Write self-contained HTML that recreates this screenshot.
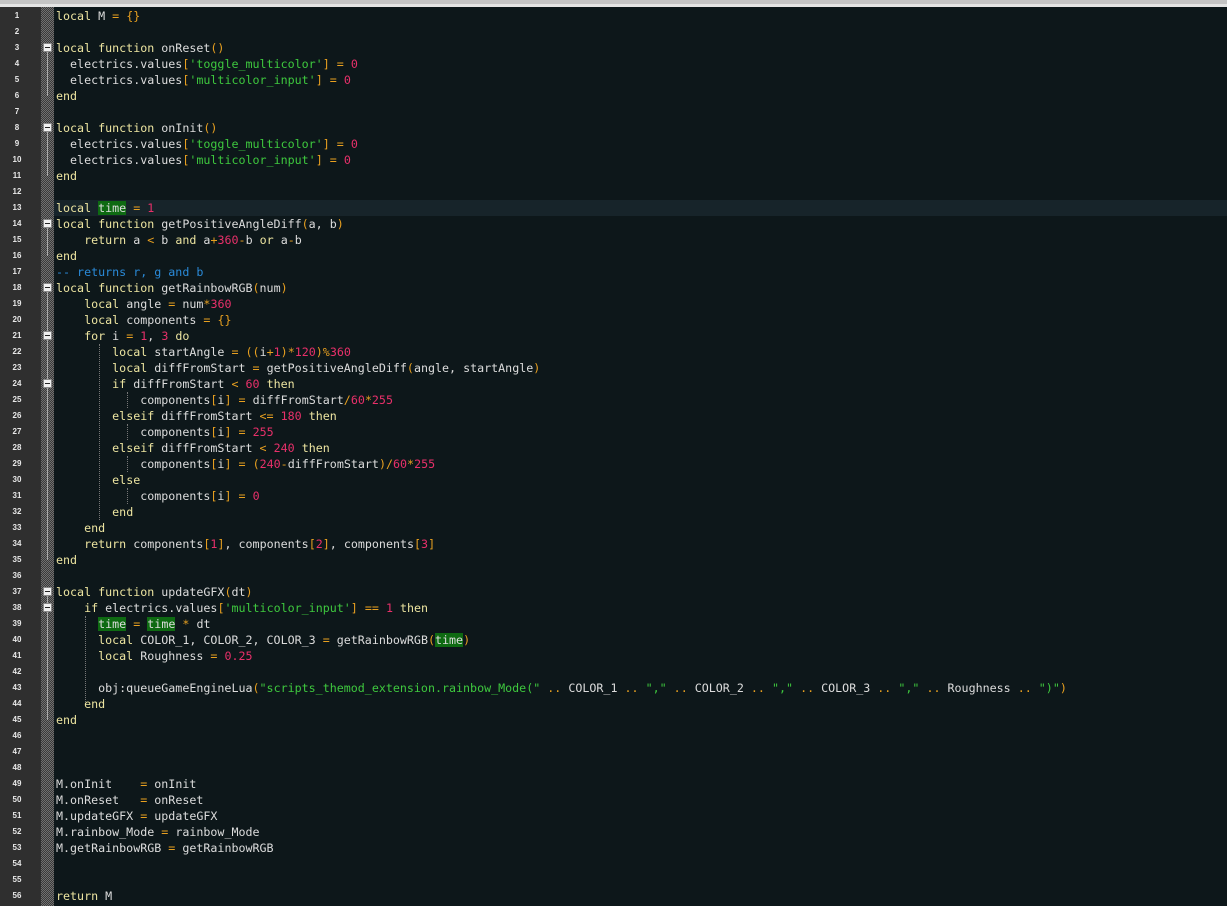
<!DOCTYPE html>
<html><head><meta charset="utf-8"><style>
body{margin:0;width:1227px;height:906px;background:#0d171a;overflow:hidden;position:relative;font-family:"Liberation Mono",monospace}
#tabs{position:absolute;left:0;top:0;width:1227px;height:4px;background:#c4c4c4}
#tabs2{position:absolute;left:0;top:4px;width:1227px;height:3px;background:#e4e4e4}
#gut{position:absolute;left:0;top:7px;width:41px;height:899px;background:#2f2f2f}
#fold{position:absolute;left:41px;top:7px;width:13px;height:899px;background-color:#5a5a5a;background-image:repeating-conic-gradient(#3a3a3a 0 25%,#707070 0 50%);background-size:2px 2px}
#cur{position:absolute;left:54px;top:200px;width:1173px;height:16px;background:#17242a}
.ln{position:absolute;left:0;width:34px;text-align:center;font-size:8px;line-height:16px;color:#e8e8e8;font-family:"Liberation Sans",sans-serif;font-weight:bold}
pre{position:absolute;left:56px;top:8px;margin:0;font-size:11.67px;line-height:16px;color:#dcdcdc}
.k{color:#ece4a0}.o{color:#e8a020}.n{color:#e8306a}.s{color:#3ec83e}.c{color:#2a8ad8}
.h{background:#0e6a12}
.fb{position:absolute;left:43px;width:9px;height:9px;background:#f0f0f0;box-sizing:border-box;border:1px solid #888}
.fb:after{content:"";position:absolute;left:1px;top:3px;width:5px;height:1px;background:#222}
.fl{position:absolute;left:47px;width:1px;background:#aaa}
.g{position:absolute;width:1px;border-left:1px dotted #777}
</style></head><body>
<div id="tabs"></div><div id="tabs2"></div>
<div id="gut"></div><div id="fold"></div><div id="cur"></div>
<div id="lns"></div>
<div class="fb" style="top:43px"></div><div class="fl" style="top:52px;height:44px"></div>
<div class="fb" style="top:123px"></div><div class="fl" style="top:132px;height:44px"></div>
<div class="fb" style="top:219px"></div><div class="fl" style="top:228px;height:28px"></div>
<div class="fb" style="top:283px"></div><div class="fl" style="top:292px;height:268px"></div>
<div class="fb" style="top:331px"></div>
<div class="fb" style="top:379px"></div>
<div class="fb" style="top:587px"></div><div class="fl" style="top:596px;height:124px"></div>
<div class="fb" style="top:603px"></div>
<div class="g" style="left:99px;top:344px;height:176px"></div>
<div class="g" style="left:127px;top:392px;height:16px"></div>
<div class="g" style="left:127px;top:424px;height:16px"></div>
<div class="g" style="left:127px;top:456px;height:16px"></div>
<div class="g" style="left:127px;top:488px;height:16px"></div>
<div class="g" style="left:85px;top:616px;height:88px"></div>
<pre><span class="k">local</span> M <span class="o">=</span> <span class="o">{}</span>

<span class="k">local function</span> onReset<span class="o">()</span>
  electrics.values<span class="o">[</span><span class="s">'toggle_multicolor'</span><span class="o">]</span> <span class="o">=</span> <span class="n">0</span>
  electrics.values<span class="o">[</span><span class="s">'multicolor_input'</span><span class="o">]</span> <span class="o">=</span> <span class="n">0</span>
<span class="k">end</span>

<span class="k">local function</span> onInit<span class="o">()</span>
  electrics.values<span class="o">[</span><span class="s">'toggle_multicolor'</span><span class="o">]</span> <span class="o">=</span> <span class="n">0</span>
  electrics.values<span class="o">[</span><span class="s">'multicolor_input'</span><span class="o">]</span> <span class="o">=</span> <span class="n">0</span>
<span class="k">end</span>

<span class="k">local</span> <span class="h">time</span> <span class="o">=</span> <span class="n">1</span>
<span class="k">local function</span> getPositiveAngleDiff<span class="o">(</span>a, b<span class="o">)</span>
    <span class="k">return</span> a <span class="o">&lt;</span> b <span class="k">and</span> a<span class="o">+</span><span class="n">360</span><span class="o">-</span>b <span class="k">or</span> a<span class="o">-</span>b
<span class="k">end</span>
<span class="c">-- returns r, g and b</span>
<span class="k">local function</span> getRainbowRGB<span class="o">(</span>num<span class="o">)</span>
    <span class="k">local</span> angle <span class="o">=</span> num<span class="o">*</span><span class="n">360</span>
    <span class="k">local</span> components <span class="o">=</span> <span class="o">{}</span>
    <span class="k">for</span> i <span class="o">=</span> <span class="n">1</span>, <span class="n">3</span> <span class="k">do</span>
        <span class="k">local</span> startAngle <span class="o">=</span> <span class="o">((</span>i<span class="o">+</span><span class="n">1</span><span class="o">)*</span><span class="n">120</span><span class="o">)%</span><span class="n">360</span>
        <span class="k">local</span> diffFromStart <span class="o">=</span> getPositiveAngleDiff<span class="o">(</span>angle, startAngle<span class="o">)</span>
        <span class="k">if</span> diffFromStart <span class="o">&lt;</span> <span class="n">60</span> <span class="k">then</span>
            components<span class="o">[</span>i<span class="o">]</span> <span class="o">=</span> diffFromStart<span class="o">/</span><span class="n">60</span><span class="o">*</span><span class="n">255</span>
        <span class="k">elseif</span> diffFromStart <span class="o">&lt;=</span> <span class="n">180</span> <span class="k">then</span>
            components<span class="o">[</span>i<span class="o">]</span> <span class="o">=</span> <span class="n">255</span>
        <span class="k">elseif</span> diffFromStart <span class="o">&lt;</span> <span class="n">240</span> <span class="k">then</span>
            components<span class="o">[</span>i<span class="o">]</span> <span class="o">=</span> <span class="o">(</span><span class="n">240</span><span class="o">-</span>diffFromStart<span class="o">)/</span><span class="n">60</span><span class="o">*</span><span class="n">255</span>
        <span class="k">else</span>
            components<span class="o">[</span>i<span class="o">]</span> <span class="o">=</span> <span class="n">0</span>
        <span class="k">end</span>
    <span class="k">end</span>
    <span class="k">return</span> components<span class="o">[</span><span class="n">1</span><span class="o">]</span>, components<span class="o">[</span><span class="n">2</span><span class="o">]</span>, components<span class="o">[</span><span class="n">3</span><span class="o">]</span>
<span class="k">end</span>

<span class="k">local function</span> updateGFX<span class="o">(</span>dt<span class="o">)</span>
    <span class="k">if</span> electrics.values<span class="o">[</span><span class="s">'multicolor_input'</span><span class="o">]</span> <span class="o">==</span> <span class="n">1</span> <span class="k">then</span>
      <span class="h">time</span> <span class="o">=</span> <span class="h">time</span> <span class="o">*</span> dt
      <span class="k">local</span> COLOR_1, COLOR_2, COLOR_3 <span class="o">=</span> getRainbowRGB<span class="o">(</span><span class="h">time</span><span class="o">)</span>
      <span class="k">local</span> Roughness <span class="o">=</span> <span class="n">0.25</span>

      obj:queueGameEngineLua<span class="o">(</span><span class="s">"scripts_themod_extension.rainbow_Mode("</span> <span class="o">..</span> COLOR_1 <span class="o">..</span> <span class="s">","</span> <span class="o">..</span> COLOR_2 <span class="o">..</span> <span class="s">","</span> <span class="o">..</span> COLOR_3 <span class="o">..</span> <span class="s">","</span> <span class="o">..</span> Roughness <span class="o">..</span> <span class="s">")"</span><span class="o">)</span>
    <span class="k">end</span>
<span class="k">end</span>



M.onInit    <span class="o">=</span> onInit
M.onReset   <span class="o">=</span> onReset
M.updateGFX <span class="o">=</span> updateGFX
M.rainbow_Mode <span class="o">=</span> rainbow_Mode
M.getRainbowRGB <span class="o">=</span> getRainbowRGB


<span class="k">return</span> M</pre>
<div style="position:absolute;left:0;top:8px">
<div class="ln" style="position:static">1</div><div class="ln" style="position:static">2</div><div class="ln" style="position:static">3</div><div class="ln" style="position:static">4</div><div class="ln" style="position:static">5</div><div class="ln" style="position:static">6</div><div class="ln" style="position:static">7</div><div class="ln" style="position:static">8</div><div class="ln" style="position:static">9</div><div class="ln" style="position:static">10</div><div class="ln" style="position:static">11</div><div class="ln" style="position:static">12</div><div class="ln" style="position:static">13</div><div class="ln" style="position:static">14</div><div class="ln" style="position:static">15</div><div class="ln" style="position:static">16</div><div class="ln" style="position:static">17</div><div class="ln" style="position:static">18</div><div class="ln" style="position:static">19</div><div class="ln" style="position:static">20</div><div class="ln" style="position:static">21</div><div class="ln" style="position:static">22</div><div class="ln" style="position:static">23</div><div class="ln" style="position:static">24</div><div class="ln" style="position:static">25</div><div class="ln" style="position:static">26</div><div class="ln" style="position:static">27</div><div class="ln" style="position:static">28</div><div class="ln" style="position:static">29</div><div class="ln" style="position:static">30</div><div class="ln" style="position:static">31</div><div class="ln" style="position:static">32</div><div class="ln" style="position:static">33</div><div class="ln" style="position:static">34</div><div class="ln" style="position:static">35</div><div class="ln" style="position:static">36</div><div class="ln" style="position:static">37</div><div class="ln" style="position:static">38</div><div class="ln" style="position:static">39</div><div class="ln" style="position:static">40</div><div class="ln" style="position:static">41</div><div class="ln" style="position:static">42</div><div class="ln" style="position:static">43</div><div class="ln" style="position:static">44</div><div class="ln" style="position:static">45</div><div class="ln" style="position:static">46</div><div class="ln" style="position:static">47</div><div class="ln" style="position:static">48</div><div class="ln" style="position:static">49</div><div class="ln" style="position:static">50</div><div class="ln" style="position:static">51</div><div class="ln" style="position:static">52</div><div class="ln" style="position:static">53</div><div class="ln" style="position:static">54</div><div class="ln" style="position:static">55</div><div class="ln" style="position:static">56</div>
</div>
</body></html>
